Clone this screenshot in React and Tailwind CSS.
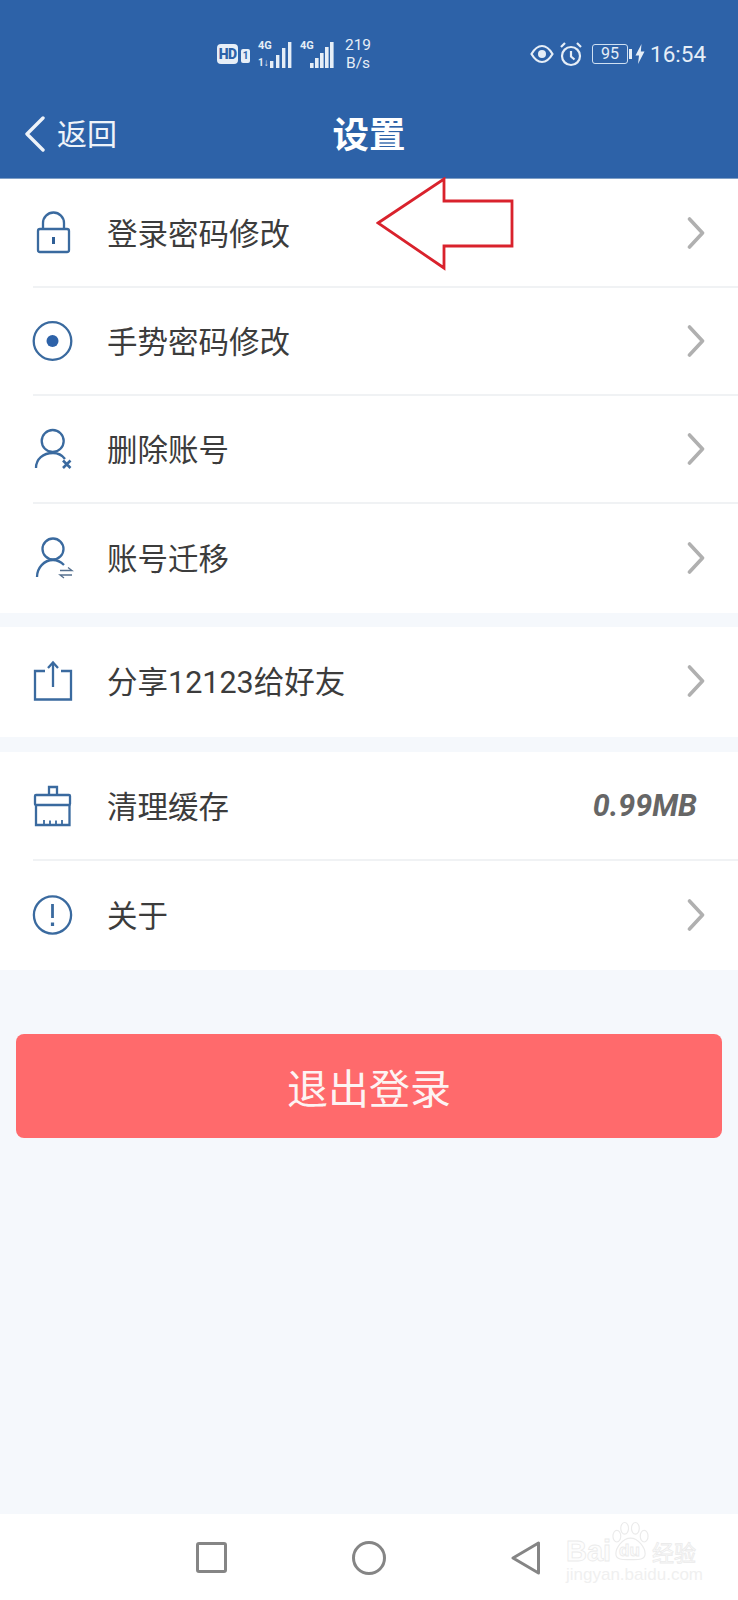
function Chevron() {
  return (
    <svg width="18" height="32" viewBox="0 0 18 32" fill="none" stroke="#b0b0b0" strokeWidth="3.6" strokeLinecap="round" strokeLinejoin="round" className="shrink-0">
      <path d="M2.5 2 L15.5 16 L2.5 30" />
    </svg>
  );
}
const ic = { width: 40, height: 40, viewBox: "0 0 40 40", fill: "none", stroke: "#3a6a9f", strokeWidth: 2.3, className: "shrink-0 overflow-visible" };
const LockIcon = () => (
  <svg {...ic}>
    <rect x="5" y="16" width="31" height="23" rx="2" />
    <path d="M10 16 V10 a10.5 10.5 0 0 1 21 0 V16" />
    <path d="M20.5 24 V31" strokeWidth="3" stroke="#2f5f96" />
  </svg>
);
const GestureIcon = () => (
  <svg {...ic}>
    <circle cx="19.5" cy="20" r="18.8" />
    <circle cx="19.5" cy="20" r="6" fill="#2d62a8" stroke="none" />
  </svg>
);
const UserXIcon = () => (
  <svg {...ic}>
    <circle cx="19.7" cy="12" r="11" />
    <path d="M3 39 C3 30 10 24 20 24 C25 24 29 26 32 30" />
    <path d="M30 31.5 L37.5 39 M37.5 31.5 L30 39" strokeWidth="2.6" />
  </svg>
);
const UserSwapIcon = () => (
  <svg {...ic}>
    <circle cx="20" cy="11" r="10.5" />
    <path d="M4 39 C4 30 11 22 20 22 C25 22 28 24 31 27" />
    <path d="M27 32.5 H39 L35 29.5 M39 37 H27 L31 40" strokeWidth="1.3" stroke="#55708f" />
  </svg>
);
const ShareIcon = () => (
  <svg {...ic}>
    <path d="M12 10 H2 V38.5 H38 V10 H28" />
    <path d="M20 2 V26" />
    <path d="M15 7 L20 1.5 L25 7" />
  </svg>
);
const CleanIcon = () => (
  <svg {...ic}>
    <path d="M16 9 V1 H24 V9" />
    <rect x="2" y="9" width="35" height="10" rx="1" />
    <path d="M3 19 V39 H36.5 V19" />
    <path d="M11 39 V34 M17 39 V34.5 M23 39 V34.5 M29 39 V34" strokeWidth="1.8" />
  </svg>
);
const InfoIcon = () => (
  <svg {...ic}>
    <circle cx="19.5" cy="20" r="18.6" />
    <path d="M19.5 9 V23" strokeWidth="2.8" />
    <path d="M19.5 27.5 V31" strokeWidth="3.2" />
  </svg>
);

function Row({ h, icon, label, value, last }) {
  return (
    <div className="ml-[33px] flex items-center pr-[33px] border-b-2 border-[#f0f2f4]" style={{ height: h, borderBottomColor: last ? "transparent" : undefined }}>
      {icon}
      <span className="ml-[34px] mt-[5px] flex-1 text-[30.5px] leading-none text-[#3c3c3c]">{label}</span>
      {value ? (
        <span className="mr-[8px] text-[30.5px] font-bold italic text-[#666666] font-['Roboto',sans-serif]">{value}</span>
      ) : (
        <Chevron />
      )}
    </div>
  );
}

function StatusBar() {
  return (
    <div className="h-[106px] flex items-center text-[#e6eef7] font-['Roboto',sans-serif] pt-[2px]">
      <div className="ml-[217px] flex items-center h-[20px] w-[21px] justify-center rounded-[4px] bg-[#e6eef7] text-[#2d62a8] text-[14px] font-black leading-none tracking-tighter">HD</div>
      <div className="ml-[3px] mt-[3px] flex items-center justify-center w-[9px] h-[14px] rounded-[2px] bg-[#e6eef7] text-[#2d62a8] text-[10px] font-bold leading-none">1</div>
      <div className="ml-[8px] relative w-[34px] h-[28px]">
        <span className="absolute left-0 top-0 text-[11px] font-bold leading-none">4G</span>
        <span className="absolute left-0 bottom-0 text-[10px] font-bold leading-none">1↓</span>
        <div className="absolute right-0 bottom-0"><svg width="22" height="26" viewBox="0 0 22 26" fill="#e6eef7"><rect x="0" y="19" width="3.4" height="7"/><rect x="6" y="13" width="3.4" height="13"/><rect x="12" y="6" width="3.4" height="20"/><rect x="18" y="0" width="3.4" height="26"/></svg></div>
      </div>
      <div className="ml-[8px] relative w-[34px] h-[28px]">
        <span className="absolute left-0 top-0 text-[11px] font-bold leading-none">4G</span>
        <div className="absolute right-0 bottom-0"><svg width="24" height="26" viewBox="0 0 24 26" fill="#e6eef7"><rect x="0" y="21" width="3.6" height="5"/><rect x="5" y="16" width="3.6" height="10"/><rect x="10" y="11" width="3.6" height="15"/><rect x="15" y="5" width="3.6" height="21"/><rect x="20" y="0" width="3.6" height="26"/></svg></div>
      </div>
      <div className="ml-[10px] flex flex-col items-center text-[15.5px] leading-[18px] w-[28px]">
        <span>219</span>
        <span>B/s</span>
      </div>
      <svg width="24" height="20" viewBox="0 0 24 20" fill="none" stroke="#e6eef7" strokeWidth="2.2" className="ml-[158px] shrink-0">
        <path d="M1.5 10 C5 4 8 2 12 2 C16 2 19 4 22.5 10 C19 16 16 18 12 18 C8 18 5 16 1.5 10 Z" />
        <circle cx="12" cy="10" r="4" fill="#e6eef7" stroke="none" />
      </svg>
      <svg width="24" height="26" viewBox="0 0 24 26" fill="none" stroke="#e6eef7" strokeWidth="2.2" className="ml-[5px] shrink-0">
        <circle cx="12" cy="15" r="9" />
        <path d="M12 10 V15.5 L15.5 18.5 M2 6 L6 2 M22 6 L18 2" />
      </svg>
      <div className="ml-[9px] flex items-center justify-center w-[36px] h-[20px] rounded-[3px] border border-[#cfe0f2] text-[16px] leading-none">95</div>
      <div className="ml-[1px] w-[3px] h-[10px] bg-[#e6eef7]" />
      <svg width="10" height="20" viewBox="0 0 10 20" fill="#e6eef7" className="ml-[3px] shrink-0">
        <path d="M6.5 0 L0.5 11.5 H4 L3 20 L9.5 7.5 H5.8 Z" />
      </svg>
      <span className="ml-[5px] text-[22.5px] leading-none">16:54</span>
    </div>
  );
}

function Watermark() {
  return (
    <div className="absolute left-[566px] top-[6px] w-[134px] h-[64px] font-['Liberation_Sans',sans-serif] text-[#fdfdfd] [-webkit-text-stroke:0.8px_#ebebeb]">
      <span className="absolute left-0 top-[17px] text-[29px] font-bold leading-none">Bai</span>
      <svg width="39" height="42" viewBox="0 0 40 42" fill="none" stroke="#ebebeb" strokeWidth="1.2" className="absolute left-[45px] top-[1px]">
        <ellipse cx="6" cy="15" rx="4" ry="6" />
        <ellipse cx="14" cy="7" rx="4" ry="6" />
        <ellipse cx="25" cy="7" rx="4" ry="6" />
        <ellipse cx="34" cy="15" rx="4" ry="6" />
        <path d="M20 17 C28 17 35 27 35 33 C35 40 26 39 20 39 C14 39 5 40 5 33 C5 27 12 17 20 17 Z" />
      </svg>
      <span className="absolute left-[53px] top-[22px] text-[17px] font-bold leading-none">du</span>
      <span className="absolute left-[86px] top-[20px] text-[22px] leading-none font-['Noto_Sans_CJK_SC',sans-serif]">经验</span>
      <span className="absolute left-0 top-[46px] text-[17px] leading-none text-[#f0f0f0] [-webkit-text-stroke:0px_transparent]">jingyan.baidu.com</span>
    </div>
  );
}

export default function App() {
  return (
    <div className="relative w-[738px] h-[1600px] flex flex-col overflow-hidden bg-[#f5f8fc] font-['Roboto','Noto_Sans_CJK_SC',sans-serif]">
      <header className="h-[179px] bg-[#2d62a8] border-b border-[#7f9fc6]">
        <StatusBar />
        <div className="h-[56px] grid grid-cols-[1fr_auto_1fr] items-center text-white">
          <div className="flex items-center pl-[24px]">
            <svg width="22" height="36" viewBox="0 0 22 36" fill="none" stroke="#eef3f9" strokeWidth="3.4" strokeLinecap="round" strokeLinejoin="round" className="shrink-0">
              <path d="M19 2 L3 18 L19 34" />
            </svg>
            <span className="ml-[11px] mt-[2px] text-[30px] leading-none text-[#eef3f9]">返回</span>
          </div>
          <span className="mb-[2px] text-[36.5px] font-bold leading-none font-['Noto_Sans_CJK_SC',sans-serif]">设置</span>
          <div />
        </div>
      </header>

      <section className="bg-white h-[434px]">
        <Row h={109} icon={<LockIcon />} label="登录密码修改" />
        <Row h={108} icon={<GestureIcon />} label="手势密码修改" />
        <Row h={108} icon={<UserXIcon />} label="删除账号" />
        <Row h={109} icon={<UserSwapIcon />} label="账号迁移" last />
      </section>

      <section className="bg-white mt-[14px] h-[110px]">
        <Row h={110} icon={<ShareIcon />} label="分享12123给好友" last />
      </section>

      <section className="bg-white mt-[15px] h-[218px]">
        <Row h={109} icon={<CleanIcon />} label="清理缓存" value="0.99MB" />
        <Row h={109} icon={<InfoIcon />} label="关于" last />
      </section>

      <button className="mt-[64px] mx-[16px] h-[104px] rounded-[8px] bg-[#ff6a6c] text-[#fdf3f3] text-[41px] leading-none font-['Noto_Sans_CJK_SC',sans-serif] flex items-center justify-center">
        退出登录
      </button>

      <div className="flex-1" />

      <nav className="relative h-[86px] bg-white flex items-center pl-[196px] gap-[125px] pt-[1px]">
        <svg width="31" height="31" viewBox="0 0 31 31" fill="none" stroke="#858585" strokeWidth="3" strokeLinejoin="round" className="shrink-0">
          <rect x="1.5" y="1.5" width="28" height="28" rx="1.5" />
        </svg>
        <svg width="34" height="34" viewBox="0 0 34 34" fill="none" stroke="#858585" strokeWidth="3" className="shrink-0">
          <circle cx="17" cy="17" r="15.5" />
        </svg>
        <svg width="29" height="34" viewBox="0 0 29 34" fill="none" stroke="#858585" strokeWidth="3" strokeLinejoin="round" className="shrink-0">
          <path d="M27.5 2 V32 L2 17 Z" />
        </svg>
        <Watermark />
      </nav>

      <svg width="140" height="94" viewBox="0 0 140 94" fill="none" stroke="#d9222c" strokeWidth="2.8" className="absolute left-[376px] top-[177px]">
        <path d="M2 46 L68 2 V24 H136 V69 H68 V91 Z" />
      </svg>
    </div>
  );
}
